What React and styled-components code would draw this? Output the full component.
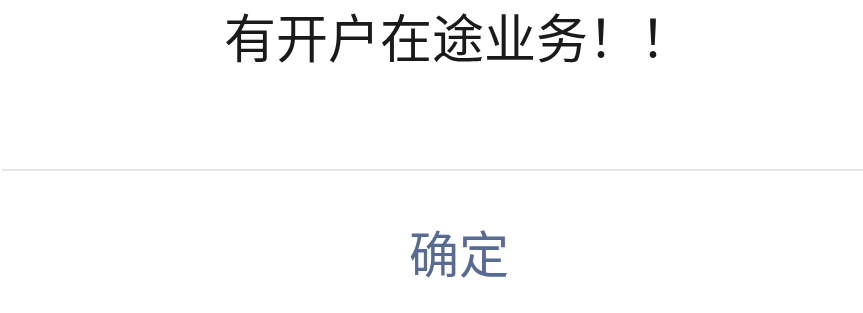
import React from "react";
import styled, { createGlobalStyle } from "styled-components";

const Global = createGlobalStyle`
  html, body { margin: 0; padding: 0; background: #fff; }
  body { font-family: "Noto Sans CJK SC", "Noto Sans", sans-serif; }
`;

const Dialog = styled.div`
  width: 863px;
  height: 313px;
  display: flex;
  flex-direction: column;
  background: #fff;
  overflow: hidden;
`;

const Body = styled.div`
  height: 169px;
  display: flex;
  justify-content: center;
  padding-left: 53px;
  box-sizing: border-box;
`;

const Message = styled.p`
  margin: 0;
  font-size: 52px;
  line-height: 72px;
  color: #1a1a1a;
`;

const Footer = styled.div`
  border-top: 2px solid #e5e5e5;
  margin-left: 2px;
  flex: 1;
  display: flex;
  justify-content: center;
  align-items: flex-start;
  padding-top: 44px;
  padding-left: 53px;
`;

const Button = styled.button`
  border: none;
  background: none;
  padding: 0;
  font-family: inherit;
  font-size: 50px;
  line-height: 72px;
  color: #576b95;
  cursor: pointer;
`;

export default function App() {
  return (
    <>
      <Global />
      <Dialog>
        <Body>
          <Message>有开户在途业务！！</Message>
        </Body>
        <Footer>
          <Button>确定</Button>
        </Footer>
      </Dialog>
    </>
  );
}
